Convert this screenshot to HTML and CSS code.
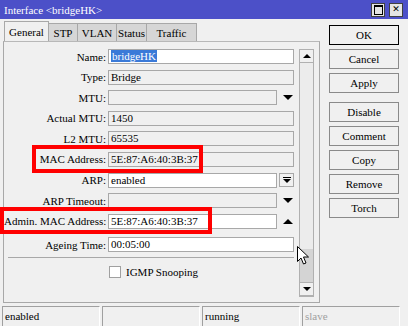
FILE: index.html
```html
<!DOCTYPE html>
<html lang="en">
<head>
  <meta charset="UTF-8">
  <title>Interface &lt;bridgeHK&gt;</title>
  <link rel="stylesheet" href="styles.css">
</head>
<body>
  <div class="window">
    <div class="titlebar">
      <span class="title">Interface &lt;bridgeHK&gt;</span>
      <div class="title-btns">
        <span class="tbtn"><span class="max-icon"></span></span>
        <span class="tbtn close">&#x2715;</span>
      </div>
    </div>

    <div class="body">
      <div class="main">
        <div class="tabs">
          <span class="tab active">General</span>
          <span class="tab tab-stp">STP</span>
          <span class="tab tab-vlan">VLAN</span>
          <span class="tab tab-status">Status</span>
          <span class="tab tab-traffic">Traffic</span>
        </div>

        <div class="panel">
          <div class="form">
            <div class="row">
              <label>Name:</label>
              <div class="field white"><span class="selected">bridgeHK</span></div>
            </div>
            <div class="row">
              <label>Type:</label>
              <div class="field">Bridge</div>
            </div>
            <div class="row">
              <label>MTU:</label>
              <div class="field short"></div>
              <span class="arrow down"></span>
            </div>
            <div class="row">
              <label>Actual MTU:</label>
              <div class="field">1450</div>
            </div>
            <div class="row">
              <label>L2 MTU:</label>
              <div class="field">65535</div>
            </div>
            <div class="row">
              <label>MAC Address:</label>
              <div class="field">5E:87:A6:40:3B:37</div>
            </div>
            <div class="row">
              <label>ARP:</label>
              <div class="field white short">enabled</div>
              <span class="drop-btn"><span class="bar"></span><span class="arrow down small"></span></span>
            </div>
            <div class="row">
              <label>ARP Timeout:</label>
              <div class="field short"></div>
              <span class="arrow down"></span>
            </div>
            <div class="row">
              <label>Admin. MAC Address:</label>
              <div class="field white short">5E:87:A6:40:3B:37</div>
              <span class="arrow up"></span>
            </div>
            <div class="row ageing">
              <label>Ageing Time:</label>
              <div class="field white">00:05:00</div>
            </div>
            <div class="separator"></div>
            <div class="check-row">
              <span class="checkbox"></span>
              <span>IGMP Snooping</span>
            </div>
          </div>

          <div class="scrollbar">
            <span class="sb-btn"><span class="arrow up small"></span></span>
            <span class="sb-track"></span>
            <span class="sb-thumb"></span>
            <span class="sb-btn"><span class="arrow down small"></span></span>
          </div>
        </div>
      </div>

      <div class="actions">
        <button class="button default">OK</button>
        <button class="button">Cancel</button>
        <button class="button">Apply</button>
        <button class="button spaced">Disable</button>
        <button class="button">Comment</button>
        <button class="button">Copy</button>
        <button class="button">Remove</button>
        <button class="button">Torch</button>
      </div>
    </div>

    <div class="statusbar">
      <span class="status-cell">enabled</span>
      <span class="status-cell"></span>
      <span class="status-cell">running</span>
      <span class="status-cell muted">slave</span>
    </div>

    <!-- annotation boxes and pointer drawn over the window -->
    <div class="mark mark-mac"></div>
    <div class="mark mark-admin"></div>
    <svg class="cursor" width="14" height="20" viewBox="0 0 14 20">
      <path d="M0.5 0.5 L0.5 15.5 L4 12 L6.5 18 L9 17 L6.5 11 L11.5 11 Z" fill="#fff" stroke="#000" stroke-width="1"/>
    </svg>
  </div>
</body>
</html>
```

FILE: styles.css
```css
body {
  margin: 0;
  padding: 0;
  background-color: #f0f0f0;
  font-family: "Liberation Serif", serif;
  font-size: 11px;
  color: #000;
}

.window {
  position: relative;
  width: 408px;
  height: 326px;
  overflow: hidden;
  background-color: #f0f0f0;
}

/* Title bar */
.titlebar {
  height: 19px;
  background-color: #4c50c8;
  display: flex;
  align-items: center;
  justify-content: space-between;
  padding: 0 5px 0 4px;
}

.title {
  color: #fff;
  font-size: 11px;
}

.title-btns {
  display: flex;
  gap: 4px;
}

.tbtn {
  width: 12px;
  height: 12px;
  border: 1px solid #404040;
  background-color: #e4e4e4;
  display: flex;
  align-items: center;
  justify-content: center;
  font-family: "DejaVu Sans", sans-serif;
  font-weight: bold;
  font-size: 9px;
  line-height: 1;
}

.max-icon {
  width: 7px;
  height: 7px;
  border: 1px solid #000;
  border-top-width: 2px;
}

/* Body */
.body {
  display: flex;
  height: 286px;
}

.main {
  width: 317px;
  margin-left: 3px;
}

.tabs {
  display: flex;
  align-items: flex-end;
  height: 20px;
  margin-top: 2px;
  padding-left: 1px;
}

.tab {
  height: 18px;
  box-sizing: border-box;
  background-color: #d6d6d6;
  border: 1px solid #a8a8a8;
  border-bottom: none;
  border-left: none;
  display: flex;
  align-items: center;
  justify-content: center;
}

.tab.active {
  height: 20px;
  width: 45px;
  background-color: #f0f0f0;
  border-left: 1px solid #a8a8a8;
}

.tab-stp { width: 29px; }
.tab-vlan { width: 39px; }
.tab-status { width: 30px; }
.tab-traffic { width: 50px; }

.panel {
  height: 262px;
  box-sizing: border-box;
  border: 1px solid #a8a8a8;
  border-top-color: #b8b8b8;
  padding: 7px 5px 5px 0;
  display: flex;
}

.form {
  width: 295px;
}

.row {
  display: flex;
  align-items: center;
  height: 15px;
  margin-bottom: 5.6px;
}

.row.ageing {
  margin-top: 8.6px;
  margin-bottom: 0;
}

.row label {
  width: 102px;
  margin-right: 2px;
  text-align: right;
  white-space: nowrap;
}

.field {
  width: 186px;
  height: 15px;
  box-sizing: border-box;
  border: 1px solid #a8a8a8;
  padding-left: 2px;
  line-height: 13px;
  white-space: nowrap;
}

.field.short {
  width: 169px;
}

.field.white {
  background-color: #fff;
}

.selected {
  background-color: #3a7ad8;
  color: #fff;
  padding: 0 1px;
}

.arrow {
  width: 0;
  height: 0;
  border-left: 5px solid transparent;
  border-right: 5px solid transparent;
  margin-left: 6px;
}

.arrow.down {
  border-top: 5px solid #000;
}

.arrow.up {
  border-bottom: 5px solid #000;
}

.arrow.small {
  border-left-width: 4px;
  border-right-width: 4px;
  margin-left: 0;
}

.arrow.small.down {
  border-top-width: 4px;
}

.arrow.small.up {
  border-bottom-width: 4px;
}

.drop-btn {
  width: 15px;
  height: 14px;
  box-sizing: border-box;
  margin-left: 2px;
  border: 1px solid #a8a8a8;
  display: flex;
  flex-direction: column;
  align-items: center;
  justify-content: center;
  gap: 1px;
}

.drop-btn .bar {
  width: 8px;
  height: 1px;
  background-color: #000;
}

.separator {
  margin: 5px 0 0 4px;
  width: 286px;
  height: 1px;
  background-color: #a8a8a8;
}

.check-row {
  display: flex;
  align-items: center;
  gap: 5px;
  margin: 8px 0 0 105px;
}

.checkbox {
  width: 12px;
  height: 12px;
  box-sizing: border-box;
  background-color: #fff;
  border: 1px solid #a0a0a0;
}

/* Scrollbar */
.scrollbar {
  width: 15px;
  height: 248px;
  box-sizing: border-box;
  border: 1px solid #b0b0b0;
  display: flex;
  flex-direction: column;
}

.sb-btn {
  height: 14px;
  box-sizing: border-box;
  border: 1px solid #b0b0b0;
  margin: -1px -1px 0;
  background-color: #f0f0f0;
  display: flex;
  align-items: center;
  justify-content: center;
}

.sb-track {
  flex: 1;
  background-color: #ececec;
}

.sb-thumb {
  height: 34px;
  background-color: #d4d4d4;
}

/* Buttons */
.actions {
  width: 70px;
  margin-left: 9px;
  padding-top: 6px;
  display: flex;
  flex-direction: column;
  gap: 4px;
}

.button {
  height: 20px;
  box-sizing: border-box;
  background-color: #f0f0f0;
  border: 1px solid #8a8a8a;
  font-family: "Liberation Serif", serif;
  font-size: 11px;
  color: #000;
  padding: 0;
}

.button.default {
  border-color: #000;
}

.button.spaced {
  margin-top: 5px;
}

/* Status bar */
.statusbar {
  display: flex;
  gap: 2px;
  padding: 1px 0 0 2px;
}

.status-cell {
  width: 98px;
  height: 20px;
  box-sizing: border-box;
  border-top: 1px solid #a0a0a0;
  border-left: 1px solid #a0a0a0;
  border-right: 1px solid #fff;
  padding-left: 2px;
  line-height: 18px;
}

.status-cell.muted {
  color: #a0a0a0;
}

/* Overlays */
.mark {
  position: absolute;
  box-sizing: border-box;
  border: 4px solid #f00;
}

.mark-mac {
  left: 32px;
  top: 145px;
  width: 171px;
  height: 28px;
}

.mark-admin {
  left: 0;
  top: 207px;
  width: 212px;
  height: 27px;
}

.cursor {
  position: absolute;
  left: 297px;
  top: 246px;
}
```
